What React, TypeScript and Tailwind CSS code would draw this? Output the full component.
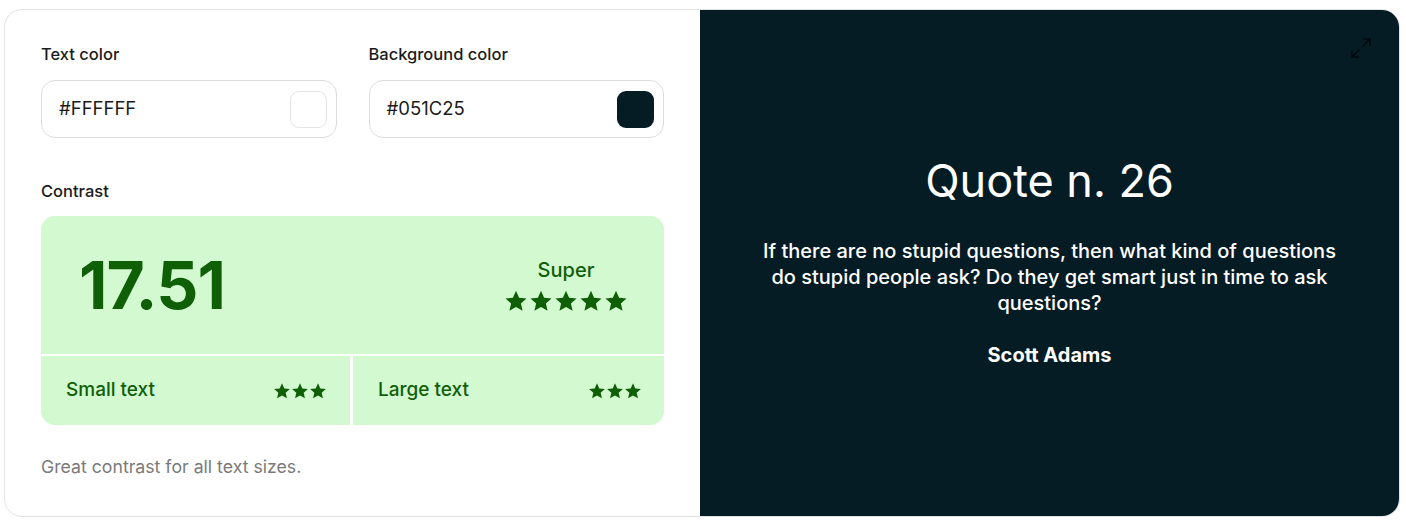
import { Maximize2 } from "lucide-react";

function Star({ size }: { size: number }) {
  return (
    <svg width={size} height={size} viewBox="0 0 24 24" fill="currentColor">
      <path d="M12 1.8l3.1 6.9 7.4.7-5.6 5 1.7 7.4L12 17.9l-6.6 3.9 1.7-7.4-5.6-5 7.4-.7z" />
    </svg>
  );
}

function Stars({ count, size, gap }: { count: number; size: number; gap: string }) {
  return (
    <div className={`flex ${gap} text-[#0f5f07]`}>
      {Array.from({ length: count }).map((_, i) => (
        <Star key={i} size={size} />
      ))}
    </div>
  );
}

function ColorInput({ label, value, swatch }: { label: string; value: string; swatch: string }) {
  return (
    <div className="flex-1">
      <div className="text-[16.5px] font-medium text-[#1b1b1b] leading-5 mb-[16px]">{label}</div>
      <div className="flex items-center justify-between h-[58px] rounded-[14px] border border-[#dcdcdc] pl-[17px] pr-[9px]">
        <span className="text-[18.5px] text-[#1b1b1b]">{value}</span>
        <div className={`w-[37px] h-[37px] rounded-[9px] ${swatch}`} />
      </div>
    </div>
  );
}

export default function App() {
  return (
    <div className="pt-[9px] pl-[4px] font-['Inter',sans-serif]">
      <div className="flex w-[1396px] h-[508px] rounded-[18px] border border-[#e2e2e2] overflow-hidden bg-white">
        {/* controls */}
        <div className="w-[695px] px-[36px] pt-[34px]">
          <div className="flex gap-[32px]">
            <ColorInput label="Text color" value="#FFFFFF" swatch="bg-white border border-[#e5e5e5]" />
            <ColorInput label="Background color" value="#051C25" swatch="bg-[#051c25]" />
          </div>

          <div className="text-[16.5px] font-medium text-[#1b1b1b] leading-5 mt-[43px] mb-[15px]">Contrast</div>

          <div className="rounded-[14px] overflow-hidden bg-white">
            <div className="flex items-center justify-between h-[138px] bg-[#d3f9d0] pl-[38px] pr-[36px]">
              <span className="text-[66px] font-bold text-[#0f5f07] tracking-[-1px]">17.51</span>
              <div className="flex flex-col items-center gap-[4px] pb-[2px]">
                <span className="text-[20px] font-medium text-[#0f5f07]">Super</span>
                <Stars count={5} size={24} gap="gap-[1px]" />
              </div>
            </div>
            <div className="flex gap-[3px] mt-[2px]">
              <div className="w-[309px] flex items-center justify-between h-[69px] bg-[#d3f9d0] pl-[25px] pr-[23px]">
                <span className="text-[19px] font-medium text-[#0f5f07]">Small text</span>
                <Stars count={3} size={18} gap="gap-0" />
              </div>
              <div className="flex-1 flex items-center justify-between h-[69px] bg-[#d3f9d0] pl-[25px] pr-[22px]">
                <span className="text-[19px] font-medium text-[#0f5f07]">Large text</span>
                <Stars count={3} size={18} gap="gap-0" />
              </div>
            </div>
          </div>

          <p className="mt-[29px] text-[17.7px] text-[#7a7a7a]">Great contrast for all text sizes.</p>
        </div>

        {/* preview */}
        <div className="relative flex-1 bg-[#051c25] text-white flex flex-col items-center pt-[143px]">
          <Maximize2 className="absolute top-[26px] right-[26px] text-[#01090c]" size={24} strokeWidth={1.5} />
          <h2 className="text-[45px] leading-[56px] font-normal">Quote n. 26</h2>
          <p className="mt-[29px] w-[585px] text-center text-[20px] leading-[26px] font-medium">
            If there are no stupid questions, then what kind of questions do stupid people ask? Do they get smart
            just in time to ask questions?
          </p>
          <p className="mt-[24px] text-[20px] font-bold">Scott Adams</p>
        </div>
      </div>
    </div>
  );
}
